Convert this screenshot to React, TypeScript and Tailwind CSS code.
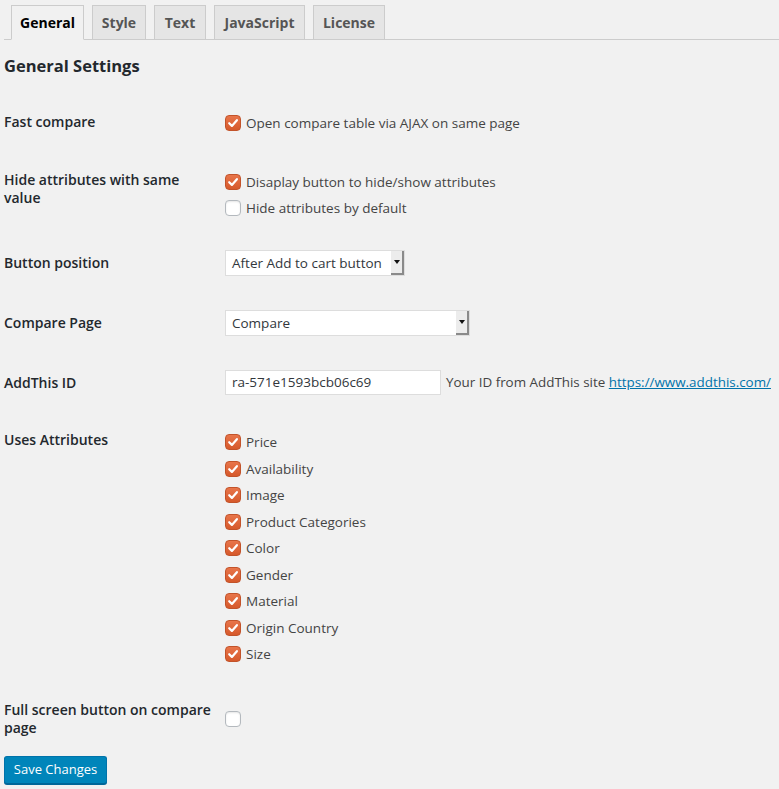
const font = { fontFamily: '"Open Sans", "Liberation Sans", sans-serif' };

const tabs = [
  { name: "General", w: "w-[73px]", active: true },
  { name: "Style", w: "w-[54px]" },
  { name: "Text", w: "w-[52px]" },
  { name: "JavaScript", w: "w-[91px]" },
  { name: "License", w: "w-[72px]" },
];

const attributes = [
  "Price",
  "Availability",
  "Image",
  "Product Categories",
  "Color",
  "Gender",
  "Material",
  "Origin Country",
  "Size",
];

const Checkbox = ({ checked }: { checked?: boolean }) =>
  checked ? (
    <span className="w-4 h-4 shrink-0 rounded-[4px] border border-[#c2532a] bg-gradient-to-b from-[#e8754a] to-[#d6592b] flex items-center justify-center">
      <svg width="12" height="12" viewBox="0 0 12 12" fill="none">
        <path d="M2.2 6.2 L4.9 8.9 L9.9 3.2" stroke="white" strokeWidth="2.2" strokeLinecap="round" strokeLinejoin="round" />
      </svg>
    </span>
  ) : (
    <span className="w-4 h-4 shrink-0 rounded-[4px] border border-[#b4b9be] bg-white shadow-[inset_0_1px_2px_rgba(0,0,0,0.1)]" />
  );

const CheckLine = ({ checked, label }: { checked?: boolean; label: string }) => (
  <div className="flex items-center gap-[5px] h-[26px]">
    <Checkbox checked={checked} />
    <span className="text-[13.5px] text-[#444]">{label}</span>
  </div>
);

const Select = ({ value, w }: { value: string; w: string }) => (
  <div className={`${w} h-[26px] flex border border-[#ddd] bg-white`}>
    <span className="flex-1 pl-[6px] text-[13.5px] text-[#32373c] leading-[24px]">{value}</span>
    <span className="w-[13px] h-full bg-[#ececec] border-r-2 border-b-2 border-[#8a8a8a] flex items-center justify-center">
      <svg width="6" height="4" viewBox="0 0 6 4">
        <path d="M0 0 H6 L3 4 Z" fill="#111" />
      </svg>
    </span>
  </div>
);

const Label = ({ children }: { children: React.ReactNode }) => (
  <div className="w-[225px] shrink-0 pl-1 pr-[10px] pt-[20px] text-[14px] leading-[18px] font-semibold text-[#23282d]">
    {children}
  </div>
);

export default function App() {
  return (
    <div className="min-h-screen bg-[#f1f1f1] overflow-hidden" style={font}>
      <div className="h-[40px] ml-1 border-b border-[#ccc] flex items-end gap-2 pl-[7px]">
        {tabs.map((t) => (
          <div
            key={t.name}
            className={`${t.w} h-[35px] -mb-px flex items-center justify-center text-[14px] font-bold border border-[#ccc] ${
              t.active ? "bg-[#f1f1f1] border-b-[#f1f1f1] text-black" : "bg-[#e5e5e5] text-[#555]"
            }`}
          >
            {t.name}
          </div>
        ))}
      </div>

      <h2 className="mt-[14px] pl-1 text-[16.5px] leading-[24px] font-bold text-[#23282d]">General Settings</h2>

      <div className="mt-[15px]">
        <div className="flex h-[58px]">
          <Label>Fast compare</Label>
          <div className="pt-[17px]">
            <CheckLine checked label="Open compare table via AJAX on same page" />
          </div>
        </div>

        <div className="flex h-[83px]">
          <Label>Hide attributes with same value</Label>
          <div className="pt-[18px]">
            <CheckLine checked label="Disaplay button to hide/show attributes" />
            <CheckLine label="Hide attributes by default" />
          </div>
        </div>

        <div className="flex h-[60px]">
          <Label>Button position</Label>
          <div className="pt-[16px]">
            <Select value="After Add to cart button" w="w-[180px]" />
          </div>
        </div>

        <div className="flex h-[60px]">
          <Label>Compare Page</Label>
          <div className="pt-[16px]">
            <Select value="Compare" w="w-[245px]" />
          </div>
        </div>

        <div className="flex h-[57px]">
          <Label>AddThis ID</Label>
          <div className="pt-[16px] flex items-center gap-[5px] h-[41px]">
            <div className="w-[216px] h-[25px] border border-[#ddd] bg-white pl-[6px] text-[13.5px] leading-[23px] text-[#32373c]">
              ra-571e1593bcb06c69
            </div>
            <span className="text-[13.4px] text-[#444] whitespace-nowrap">
              Your ID from AddThis site{" "}
              <a href="#" className="text-[#0073aa] underline">
                https://www.addthis.com/
              </a>
            </span>
          </div>
        </div>

        <div className="flex h-[270px]">
          <Label>Uses Attributes</Label>
          <div className="pt-[18px] flex flex-col">
            {attributes.map((a) => (
              <div key={a} className="h-[26.5px] flex items-center">
                <CheckLine checked label={a} />
              </div>
            ))}
          </div>
        </div>

        <div className="flex h-[75px]">
          <Label>Full screen button on compare page</Label>
          <div className="pt-[25px]">
            <div className="h-[26px] flex items-center">
              <Checkbox />
            </div>
          </div>
        </div>
      </div>

      <div className="pl-1">
        <button className="w-[103px] h-[28px] rounded-[3px] bg-[#0085ba] border border-[#0073aa] border-b-[#006799] shadow-[0_1px_0_#006799] text-white text-[13px]">
          Save Changes
        </button>
      </div>
    </div>
  );
}
